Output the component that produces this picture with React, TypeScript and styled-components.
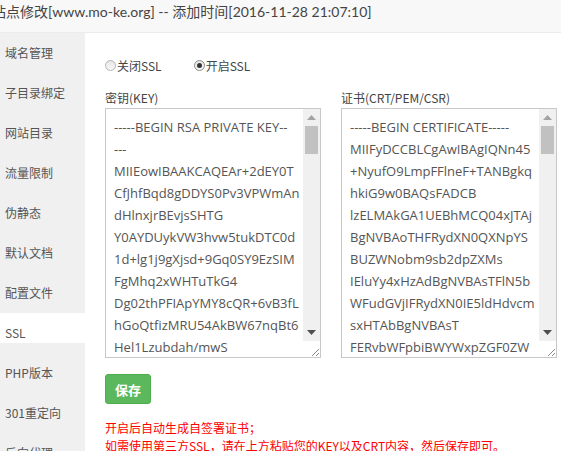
import React from "react";
import styled, { createGlobalStyle } from "styled-components";

const Global = createGlobalStyle`
  html, body { margin: 0; padding: 0; background: #fff; }
  body { font-family: "Open Sans", "Noto Sans CJK SC", sans-serif; }
`;

const Page = styled.div`
  width: 561px;
  height: 451px;
  overflow: hidden;
  display: flex;
  flex-direction: column;
`;

const TitleBar = styled.div`
  height: 32px;
  flex: none;
  background: #f8f8f8;
  border-bottom: 1px solid #ececec;
  font-family: "Lato", "Noto Sans CJK SC", sans-serif;
  font-size: 14px;
  line-height: 24px;
  color: #444;
  white-space: nowrap;
  margin-left: -8px;
`;

const Body = styled.div`
  flex: 1;
  display: flex;
  min-height: 0;
`;

const Sidebar = styled.ul`
  width: 85px;
  flex: none;
  margin: 0;
  padding: 0;
  list-style: none;
  background: #f0f0f0;
`;

const NavItem = styled.li<{ $active?: boolean }>`
  height: 30px;
  margin-bottom: 10px;
  line-height: 40px;
  padding-left: 5px;
  font-family: "Noto Sans CJK SC", sans-serif;
  font-size: 12px;
  color: #555;
  overflow: hidden;
  white-space: nowrap;
  background: ${(p) => (p.$active ? "#fff" : "transparent")};
`;

const Content = styled.div`
  flex: 1;
  padding: 24px 0 0 20px;
  font-family: "Noto Sans CJK SC", sans-serif;
  color: #555;
`;

const RadioRow = styled.div`
  display: flex;
  height: 16px;
  align-items: center;
  gap: 32px;
  font-size: 12px;
  color: #444;
`;

const RadioLabel = styled.label`
  display: flex;
  align-items: center;
`;

const RadioDot = styled.span<{ $checked?: boolean }>`
  width: 11px;
  height: 11px;
  box-sizing: border-box;
  border-radius: 50%;
  border: 1px solid ${(p) => (p.$checked ? "#8a8a8a" : "#b4b4b4")};
  background: linear-gradient(#e6e6e6, #f8f8f8);
  margin-right: 1px;
  display: flex;
  align-items: center;
  justify-content: center;
  &::after {
    content: "";
    width: 5px;
    height: 5px;
    border-radius: 50%;
    background: ${(p) => (p.$checked ? "#333" : "transparent")};
  }
`;

const Fields = styled.div`
  display: flex;
  gap: 20px;
  margin-top: 17px;
`;

const Field = styled.div`
  width: 216px;
`;

const FieldLabel = styled.div`
  font-size: 12px;
  line-height: 16px;
  height: 16px;
  margin-bottom: 2px;
  color: #444;
`;

const TextBox = styled.div`
  height: 250px;
  box-sizing: border-box;
  border: 1px solid #c8c8c8;
  display: flex;
  background: #fff;
`;

const Area = styled.textarea`
  flex: 1;
  min-width: 0;
  border: none;
  outline: none;
  resize: none;
  overflow: hidden;
  white-space: pre;
  padding: 7px 0 0 8px;
  margin: 0;
  font-family: "Open Sans", "Noto Sans CJK SC", sans-serif;
  font-size: 13px;
  line-height: 22px;
  color: #555;
  background: #fff;
`;

const ScrollCol = styled.div`
  width: 17px;
  flex: none;
  display: flex;
  flex-direction: column;
`;

const Track = styled.div`
  flex: 1;
  background: #f0f0f0;
  display: flex;
  flex-direction: column;
  align-items: center;
`;

const ArrowBtn = styled.div`
  height: 17px;
  width: 17px;
  display: flex;
  align-items: center;
  justify-content: center;
  flex: none;
`;

const Thumb = styled.div`
  width: 13px;
  height: 28px;
  background: #c1c1c1;
  flex: none;
`;

const Spacer = styled.div`
  flex: 1;
`;

const Corner = styled.div`
  height: 16px;
  width: 17px;
  background: #fff;
  display: flex;
  align-items: flex-end;
  justify-content: flex-end;
`;

const SaveButton = styled.button`
  margin-top: 16px;
  width: 46px;
  height: 30px;
  border: 1px solid #4cae4c;
  border-radius: 3px;
  background: #5cb85c;
  color: #fff;
  font-family: "Noto Sans CJK SC", sans-serif;
  font-size: 13px;
  font-weight: bold;
  padding: 0;
  display: block;
`;

const Notes = styled.div`
  margin-top: 15px;
  font-size: 12px;
  line-height: 18px;
  color: #ff0000;
  white-space: nowrap;
`;

const keyText = [
  "-----BEGIN RSA PRIVATE KEY--",
  "---",
  "MIIEowIBAAKCAQEAr+2dEY0T",
  "CfJhfBqd8gDDYS0Pv3VPWmAn",
  "dHlnxjrBEvjsSHTG",
  "Y0AYDUykVW3hvw5tukDTC0d",
  "1d+lg1j9gXjsd+9Gq0SY9EzSIM",
  "FgMhq2xWHTuTkG4",
  "Dg02thPFIApYMY8cQR+6vB3fL",
  "hGoQtfizMRU54AkBW67nqBt6",
  "Hel1Lzubdah/mwS",
  "",
].join("\n");

const certText = [
  "-----BEGIN CERTIFICATE-----",
  "MIIFyDCCBLCgAwIBAgIQNn45",
  "+NyufO9LmpFFlneF+TANBgkq",
  "hkiG9w0BAQsFADCB",
  "lzELMAkGA1UEBhMCQ04xJTAj",
  "BgNVBAoTHFRydXN0QXNpYS",
  "BUZWNobm9sb2dpZXMs",
  "IEluYy4xHzAdBgNVBAsTFlN5b",
  "WFudGVjIFRydXN0IE5ldHdvcm",
  "sxHTAbBgNVBAsT",
  "FERvbWFpbiBWYWxpZGF0ZW",
  "",
].join("\n");

const Up = () => (
  <svg width="9" height="5" viewBox="0 0 9 5">
    <path d="M4.5 0 L9 5 L0 5 Z" fill="#a3a3a3" />
  </svg>
);
const Down = () => (
  <svg width="9" height="5" viewBox="0 0 9 5">
    <path d="M0 0 L9 0 L4.5 5 Z" fill="#505050" />
  </svg>
);
const Grip = () => (
  <svg width="10" height="10" viewBox="0 0 10 10">
    <path d="M9 2 L2 9 M9 6 L6 9" stroke="#8a8a8a" strokeWidth="1" />
  </svg>
);

const TextField: React.FC<{ label: string; value: string }> = ({ label, value }) => (
  <Field>
    <FieldLabel>{label}</FieldLabel>
    <TextBox>
      <Area defaultValue={value} spellCheck={false} />
      <ScrollCol>
        <Track>
          <ArrowBtn>
            <Up />
          </ArrowBtn>
          <Thumb />
          <Spacer />
          <ArrowBtn>
            <Down />
          </ArrowBtn>
        </Track>
        <Corner>
          <Grip />
        </Corner>
      </ScrollCol>
    </TextBox>
  </Field>
);

const navItems = [
  "域名管理",
  "子目录绑定",
  "网站目录",
  "流量限制",
  "伪静态",
  "默认文档",
  "配置文件",
  "SSL",
  "PHP版本",
  "301重定向",
  "反向代理",
];

export default function App() {
  return (
    <Page>
      <Global />
      <TitleBar>站点修改[www.mo-ke.org] -- 添加时间[2016-11-28 21:07:10]</TitleBar>
      <Body>
        <Sidebar>
          {navItems.map((n) => (
            <NavItem key={n} $active={n === "SSL"}>
              {n}
            </NavItem>
          ))}
        </Sidebar>
        <Content>
          <RadioRow>
            <RadioLabel>
              <RadioDot />
              关闭SSL
            </RadioLabel>
            <RadioLabel>
              <RadioDot $checked />
              开启SSL
            </RadioLabel>
          </RadioRow>
          <Fields>
            <TextField label="密钥(KEY)" value={keyText} />
            <TextField label="证书(CRT/PEM/CSR)" value={certText} />
          </Fields>
          <SaveButton>保存</SaveButton>
          <Notes>
            开启后自动生成自签署证书；
            <br />
            如需使用第三方SSL，请在上方粘贴您的KEY以及CRT内容，然后保存即可。
          </Notes>
        </Content>
      </Body>
    </Page>
  );
}
